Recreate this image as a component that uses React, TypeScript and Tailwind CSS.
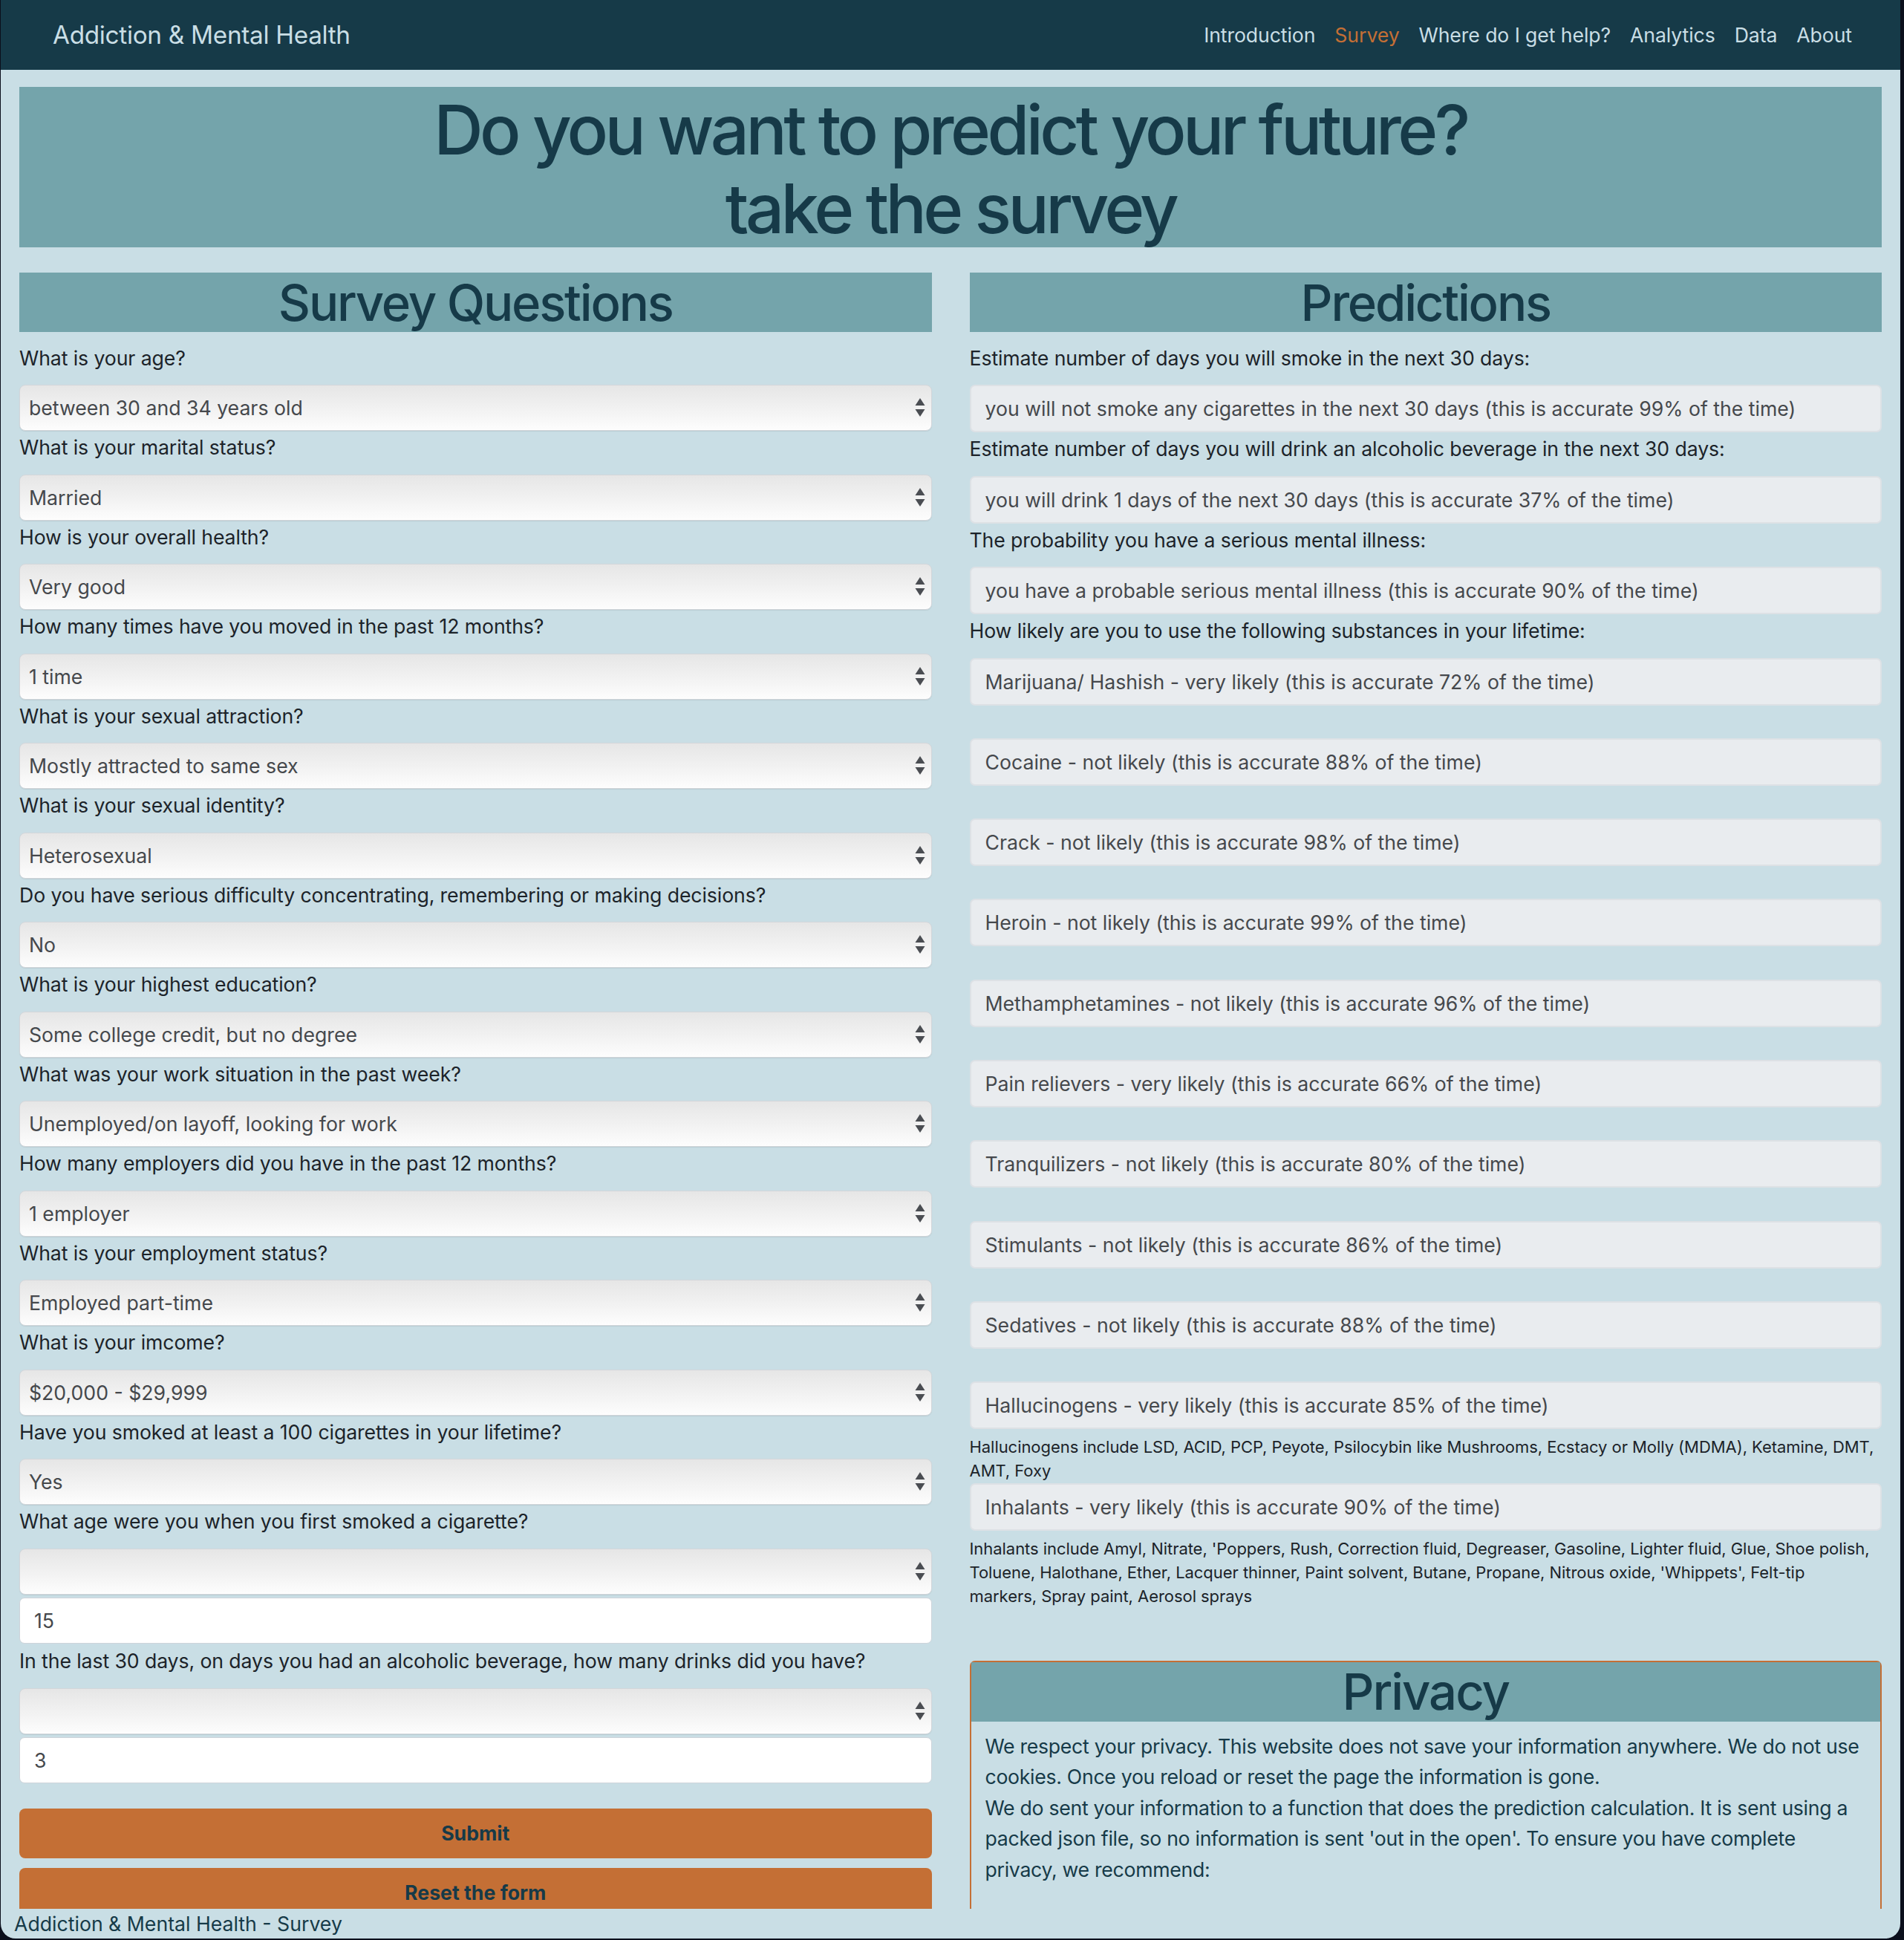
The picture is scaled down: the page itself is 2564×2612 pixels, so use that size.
import React from 'react';

const questions = [
  { q: 'What is your age?', a: 'between 30 and 34 years old' },
  { q: 'What is your marital status?', a: 'Married' },
  { q: 'How is your overall health?', a: 'Very good' },
  { q: 'How many times have you moved in the past 12 months?', a: '1 time' },
  { q: 'What is your sexual attraction?', a: 'Mostly attracted to same sex' },
  { q: 'What is your sexual identity?', a: 'Heterosexual' },
  { q: 'Do you have serious difficulty concentrating, remembering or making decisions?', a: 'No' },
  { q: 'What is your highest education?', a: 'Some college credit, but no degree' },
  { q: 'What was your work situation in the past week?', a: 'Unemployed/on layoff, looking for work' },
  { q: 'How many employers did you have in the past 12 months?', a: '1 employer' },
  { q: 'What is your employment status?', a: 'Employed part-time' },
  { q: 'What is your imcome?', a: '$20,000 - $29,999' },
  { q: 'Have you smoked at least a 100 cigarettes in your lifetime?', a: 'Yes' },
];

const openQuestions = [
  { q: 'What age were you when you first smoked a cigarette?', a: '15' },
  { q: 'In the last 30 days, on days you had an alcoholic beverage, how many drinks did you have?', a: '3' },
];

const estimates = [
  {
    q: 'Estimate number of days you will smoke in the next 30 days:',
    a: 'you will not smoke any cigarettes in the next 30 days (this is accurate 99% of the time)',
  },
  {
    q: 'Estimate number of days you will drink an alcoholic beverage in the next 30 days:',
    a: 'you will drink 1 days of the next 30 days (this is accurate 37% of the time)',
  },
  {
    q: 'The probability you have a serious mental illness:',
    a: 'you have a probable serious mental illness (this is accurate 90% of the time)',
  },
];

const substances: { a: string; note?: string[] }[] = [
  { a: 'Marijuana/ Hashish - very likely (this is accurate 72% of the time)' },
  { a: 'Cocaine - not likely (this is accurate 88% of the time)' },
  { a: 'Crack - not likely (this is accurate 98% of the time)' },
  { a: 'Heroin - not likely (this is accurate 99% of the time)' },
  { a: 'Methamphetamines - not likely (this is accurate 96% of the time)' },
  { a: 'Pain relievers - very likely (this is accurate 66% of the time)' },
  { a: 'Tranquilizers - not likely (this is accurate 80% of the time)' },
  { a: 'Stimulants - not likely (this is accurate 86% of the time)' },
  { a: 'Sedatives - not likely (this is accurate 88% of the time)' },
  {
    a: 'Hallucinogens - very likely (this is accurate 85% of the time)',
    note: [
      'Hallucinogens include LSD, ACID, PCP, Peyote, Psilocybin like Mushrooms, Ecstacy or Molly (MDMA), Ketamine, DMT,',
      'AMT, Foxy',
    ],
  },
  {
    a: 'Inhalants - very likely (this is accurate 90% of the time)',
    note: [
      "Inhalants include Amyl, Nitrate, 'Poppers, Rush, Correction fluid, Degreaser, Gasoline, Lighter fluid, Glue, Shoe polish,",
      "Toluene, Halothane, Ether, Lacquer thinner, Paint solvent, Butane, Propane, Nitrous oxide, 'Whippets', Felt-tip",
      'markers, Spray paint, Aerosol sprays',
    ],
  },
];

const navLinks = ['Introduction', 'Survey', 'Where do I get help?', 'Analytics', 'Data', 'About'];

const SelectArrows = () => (
  <svg width="14" height="26" viewBox="0 0 14 26" className="shrink-0">
    <polygon points="7,0 13.5,10 0.5,10" fill="#4a4d52" />
    <polygon points="0.5,15 13.5,15 7,25" fill="#4a4d52" />
  </svg>
);

const FakeSelect = ({ value }: { value: string }) => (
  <div className="flex h-[62px] items-center justify-between rounded-[8px] border border-[#d3d6da] bg-gradient-to-b from-[#e6e6e6] via-[#f1f1f1] to-[#fdfdfd] pl-[12px] pr-[8px] text-[#45484c] shadow-[inset_0_-1px_0_#ffffff,0_1px_1px_rgba(0,0,0,0.08)]">
    <span>{value}</span>
    <SelectArrows />
  </div>
);

const Heading = ({ children }: { children: React.ReactNode }) => (
  <div className="flex h-[80px] items-center justify-center bg-[#74a4ab]">
    <h2 className="text-[67px] font-medium leading-none text-[#163a48] tracking-[-2.2px]">{children}</h2>
  </div>
);

const Label = ({ children }: { children: React.ReactNode }) => (
  <div className="mb-[16.5px] h-[40px] text-[#1c2329] tracking-[-0.1px]">{children}</div>
);

export default function App() {
  return (
    <div className="h-[2612px] w-[2564px] bg-[#0b0f1c] font-['Inter','Noto_Sans',sans-serif] text-[26.67px] leading-[40px]">
      <div className="ml-[1px] flex h-[2610px] w-[2558px] flex-col overflow-hidden rounded-b-[20px] bg-[#c9dee5]">
        <nav className="flex h-[94px] shrink-0 items-center justify-between bg-[#163a48] pl-[70px] pr-[65px]">
          <span className="text-[33.3px] text-[#c9dee5] tracking-[-0.3px]">Addiction &amp; Mental Health</span>
          <div className="flex gap-[26px] tracking-[-0.1px]">
            {navLinks.map((l) => (
              <span key={l} className={l === 'Survey' ? 'text-[#c46f35]' : 'text-[#c9dee5]'}>
                {l}
              </span>
            ))}
          </div>
        </nav>

        <main className="flex-1 overflow-hidden px-[25px] pt-[23px]">
          <div className="flex h-[216px] flex-col items-center justify-center bg-[#74a4ab] pt-[6px] text-[92px] font-medium leading-[106px] text-[#163a48] tracking-[-4.6px]">
            <div>Do you want to predict your future?</div>
            <div>take the survey</div>
          </div>

          <div className="mt-[34px] grid grid-cols-2 gap-x-[51px]">
            <section>
              <div className="mb-[14.5px]">
                <Heading>Survey Questions</Heading>
              </div>
              {questions.map((item) => (
                <div key={item.q} className="mb-[2px]">
                  <Label>{item.q}</Label>
                  <FakeSelect value={item.a} />
                </div>
              ))}
              {openQuestions.map((item) => (
                <div key={item.q} className="mb-[3.5px]">
                  <Label>{item.q}</Label>
                  <FakeSelect value="" />
                  <div className="mt-[4px] flex h-[62px] items-center rounded-[7px] border border-[#ced4da] bg-white pl-[19px] text-[#45484c]">
                    {item.a}
                  </div>
                </div>
              ))}
              <button className="mt-[34px] flex h-[67px] w-full items-center justify-center rounded-[8px] bg-[#c46f35] font-bold text-[#163a48]">
                Submit
              </button>
              <button className="mt-[13px] flex h-[67px] w-full items-center justify-center rounded-[8px] bg-[#c46f35] font-bold text-[#163a48]">
                Reset the form
              </button>
            </section>

            <section>
              <div className="mb-[14.5px]">
                <Heading>Predictions</Heading>
              </div>
              {estimates.map((item) => (
                <div key={item.q} className="mb-[2px]">
                  <Label>{item.q}</Label>
                  <div className="flex h-[64px] items-center rounded-[7px] border-2 border-[#dde1e5] bg-[#e9ecef] pl-[19px] text-[#45484c]">
                    {item.a}
                  </div>
                </div>
              ))}
              <Label>How likely are you to use the following substances in your lifetime:</Label>
              {substances.map((item) => (
                <div key={item.a} className={item.note ? '' : 'mb-[44.3px]'}>
                  <div className="flex h-[64px] items-center rounded-[7px] border-2 border-[#dde1e5] bg-[#e9ecef] pl-[19px] text-[#45484c]">
                    {item.a}
                  </div>
                  {item.note && (
                    <div className="pt-[8px] text-[22px] leading-[32.3px] text-[#1c2329] tracking-[-0.05px]">
                      {item.note.map((line) => (
                        <div key={line} className="whitespace-nowrap">
                          {line}
                        </div>
                      ))}
                    </div>
                  )}
                </div>
              ))}

              <div className="mt-[70px] h-[400px] rounded-t-[7px] border-2 border-[#c46f35]">
                <div className="flex h-[80px] items-center justify-center bg-[#74a4ab]">
                  <h2 className="text-[67px] font-medium leading-none text-[#163a48] tracking-[-2px]">Privacy</h2>
                </div>
                <div className="px-[19px] pt-[13px] leading-[41.5px] text-[#163a48] tracking-[-0.3px]">
                  <p>
                    We respect your privacy. This website does not save your information anywhere. We do not use
                    cookies. Once you reload or reset the page the information is gone.
                  </p>
                  <p>
                    We do sent your information to a function that does the prediction calculation. It is sent using a
                    packed json file, so no information is sent 'out in the open'. To ensure you have complete
                    privacy, we recommend:
                  </p>
                </div>
              </div>
            </section>
          </div>
        </main>

        <footer className="flex h-[40px] shrink-0 items-center pl-[18px] text-[#163a48]">
          Addiction &amp; Mental Health - Survey
        </footer>
      </div>
    </div>
  );
}
